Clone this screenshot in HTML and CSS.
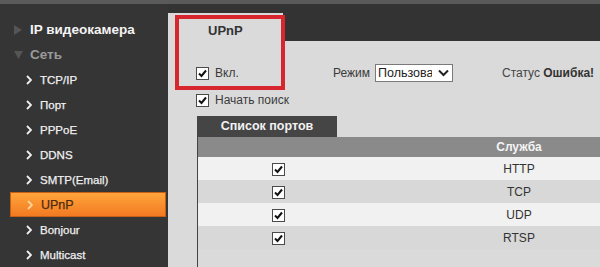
FILE: index.html
```html
<!DOCTYPE html>
<html>
<head>
    <meta charset="utf-8" />
    <title>UPnP</title>
    <link rel="stylesheet" href="styles.css">
</head>
<body>
    <div class="topline"></div>
    <div class="layout">
        <ul class="sidebar">
            <li class="group">
                <svg class="tri" width="8" height="10" viewBox="0 0 8 10"><path d="M0 0 L8 5 L0 10 Z" fill="#555"/></svg>
                <span>IP видеокамера</span>
            </li>
            <li class="group open">
                <svg class="tri" width="9" height="8" viewBox="0 0 9 8"><path d="M0 0 L9 0 L4.5 8 Z" fill="#555"/></svg>
                <span>Сеть</span>
            </li>
            <li class="item"><svg class="chev" width="6" height="10" viewBox="0 0 6 10"><path d="M1 1 L5 5 L1 9" /></svg>TCP/IP</li>
            <li class="item"><svg class="chev" width="6" height="10" viewBox="0 0 6 10"><path d="M1 1 L5 5 L1 9" /></svg>Порт</li>
            <li class="item"><svg class="chev" width="6" height="10" viewBox="0 0 6 10"><path d="M1 1 L5 5 L1 9" /></svg>PPPoE</li>
            <li class="item"><svg class="chev" width="6" height="10" viewBox="0 0 6 10"><path d="M1 1 L5 5 L1 9" /></svg>DDNS</li>
            <li class="item"><svg class="chev" width="6" height="10" viewBox="0 0 6 10"><path d="M1 1 L5 5 L1 9" /></svg>SMTP(Email)</li>
            <li class="item active"><svg class="chev" width="6" height="10" viewBox="0 0 6 10"><path d="M1 1 L5 5 L1 9" /></svg>UPnP</li>
            <li class="item"><svg class="chev" width="6" height="10" viewBox="0 0 6 10"><path d="M1 1 L5 5 L1 9" /></svg>Bonjour</li>
            <li class="item"><svg class="chev" width="6" height="10" viewBox="0 0 6 10"><path d="M1 1 L5 5 L1 9" /></svg>Multicast</li>
        </ul>

        <div class="main">
            <div class="main-head">
                <div class="page-tab">UPnP</div>
            </div>
            <div class="panel">
                <div class="row first">
                    <label class="field enable">
                        <span class="box"><svg width="11" height="11" viewBox="0 0 11 11"><path d="M2 5.5 L4.5 8 L9 2.5" /></svg></span>
                        Вкл.
                    </label>
                    <label class="field mode">
                        Режим
                        <span class="select">
                            <select>
                                <option>Пользовательский</option>
                                <option>По умолчанию</option>
                            </select>
                            <svg class="arrow" width="11" height="8" viewBox="0 0 11 8"><path d="M1 1.5 L5.5 6 L10 1.5" /></svg>
                        </span>
                    </label>
                    <span class="status">Статус <b>Ошибка!</b></span>
                </div>
                <div class="row second">
                    <label class="field">
                        <span class="box"><svg width="11" height="11" viewBox="0 0 11 11"><path d="M2 5.5 L4.5 8 L9 2.5" /></svg></span>
                        Начать поиск
                    </label>
                </div>

                <div class="list-tab">Список портов</div>
                <div class="list">
                    <table>
                        <tr>
                            <th class="col-on"></th>
                            <th class="col-service">Служба</th>
                        </tr>
                        <tr>
                            <td><span class="box"><svg width="11" height="11" viewBox="0 0 11 11"><path d="M2 5.5 L4.5 8 L9 2.5" /></svg></span></td>
                            <td>HTTP</td>
                        </tr>
                        <tr>
                            <td><span class="box"><svg width="11" height="11" viewBox="0 0 11 11"><path d="M2 5.5 L4.5 8 L9 2.5" /></svg></span></td>
                            <td>TCP</td>
                        </tr>
                        <tr>
                            <td><span class="box"><svg width="11" height="11" viewBox="0 0 11 11"><path d="M2 5.5 L4.5 8 L9 2.5" /></svg></span></td>
                            <td>UDP</td>
                        </tr>
                        <tr>
                            <td><span class="box"><svg width="11" height="11" viewBox="0 0 11 11"><path d="M2 5.5 L4.5 8 L9 2.5" /></svg></span></td>
                            <td>RTSP</td>
                        </tr>
                    </table>
                </div>
            </div>
        </div>
    </div>

    <!-- annotation frame drawn over the page tab -->
    <div class="highlight"></div>
</body>
</html>
```

FILE: styles.css
```css
body {
    margin: 0;
    width: 600px;
    height: 267px;
    overflow: hidden;
    position: relative;
    background: #333;
    font-family: "Liberation Sans", Arial, sans-serif;
    font-size: 12px;
    color: #333;
}

.topline {
    height: 4px;
    background: #5a5a5a;
}

.layout {
    display: flex;
    height: 263px;
}

/* Left navigation */
.sidebar {
    list-style: none;
    margin: 0;
    padding: 13px 0 0 0;
    width: 168px;
    flex-shrink: 0;
    background: #353535;
}

.sidebar li {
    height: 25px;
    display: flex;
    align-items: center;
}

.group {
    padding-left: 14px;
    font-weight: bold;
    font-size: 13.5px;
    color: #f4f4f4;
}

.group .tri {
    margin-right: 8px;
}

.group.open {
    color: #9a9a9a;
}

.group.open .tri {
    margin-right: 7px;
}

.item {
    padding-left: 26px;
    font-size: 11.5px;
    color: #f0f0f0;
    -webkit-text-stroke: 0.25px #f0f0f0;
}

.chev {
    margin-right: 8px;
}

.chev path {
    fill: none;
    stroke: #f0f0f0;
    stroke-width: 1.8;
}

.item.active {
    margin-left: 10px;
    width: 156px;
    box-sizing: border-box;
    padding-left: 16px;
    background: linear-gradient(#ffa53a, #f27a22);
    border: 1px solid #c85f17;
    color: #4c2b12;
    -webkit-text-stroke: 0.25px #4c2b12;
    font-size: 12.5px;
}

.item.active .chev path {
    stroke: #ffd49a;
}

/* Main area */
.main {
    flex: 1;
    min-width: 0;
    display: flex;
    flex-direction: column;
}

.main-head {
    height: 37px;
    padding-top: 9px;
    box-sizing: border-box;
    background: #333;
}

.page-tab {
    width: 115px;
    height: 28px;
    box-sizing: border-box;
    padding: 10px 0 0 40px;
    line-height: 15px;
    background: #dadada;
    font-weight: bold;
    font-size: 13px;
    color: #333;
}

.panel {
    flex: 1;
    display: flex;
    flex-direction: column;
    background: #dadada;
    padding: 23px 0 0 28px;
}

.row {
    display: flex;
    align-items: center;
}

.row.first {
    height: 18px;
}

.row.second {
    height: 16px;
    margin-top: 10px;
}

.field {
    display: flex;
    align-items: center;
    color: #3a3a3a;
}

.box {
    display: inline-flex;
    align-items: center;
    justify-content: center;
    width: 13px;
    height: 13px;
    box-sizing: border-box;
    border: 1px solid #4a4a4a;
    background: #fff;
    margin-right: 6px;
}

.box path {
    fill: none;
    stroke: #111;
    stroke-width: 2;
}

.enable {
    width: 137px;
}

.mode {
    width: 129px;
}

.select {
    position: relative;
    margin-left: 5px;
}

.select select {
    appearance: none;
    -webkit-appearance: none;
    width: 78px;
    height: 18px;
    box-sizing: border-box;
    border: 1px solid #7a7a7a;
    border-radius: 0;
    background: #fff;
    padding: 0 20px 0 2px;
    font-family: "Liberation Sans", Arial, sans-serif;
    font-size: 12.5px;
    color: #222;
}

.select .arrow {
    position: absolute;
    right: 4px;
    top: 5px;
}

.arrow path {
    fill: none;
    stroke: #222;
    stroke-width: 2;
}

.status {
    margin-left: 40px;
    color: #444;
}

.status b {
    color: #333;
}

/* Port list */
.list-tab {
    margin: 8px 0 0 1px;
    width: 140px;
    height: 21px;
    line-height: 21px;
    background: #454545;
    color: #f2f2f2;
    font-weight: bold;
    font-size: 12.5px;
    text-align: center;
}

.list {
    flex: 1;
    margin-left: 1px;
    border-left: 1px solid #444;
    overflow: hidden;
}

table {
    border-collapse: collapse;
    width: 482px;
    table-layout: fixed;
}

th {
    height: 20px;
    padding: 0;
    background: #8a8a8a;
    color: #f4f4f4;
    font-weight: bold;
    font-size: 12px;
}

.col-on {
    width: 160px;
}

td {
    height: 23px;
    padding: 0;
    text-align: center;
    color: #333;
}

td .box {
    margin: 0;
    vertical-align: middle;
}

tr:nth-child(even) td {
    background: #f1f1f1;
}

tr:nth-child(odd) td {
    background: #d8d8d8;
}

/* Red annotation frame */
.highlight {
    position: absolute;
    left: 175px;
    top: 15px;
    width: 110px;
    height: 75px;
    box-sizing: border-box;
    border: 4px solid #d8262e;
}
```
